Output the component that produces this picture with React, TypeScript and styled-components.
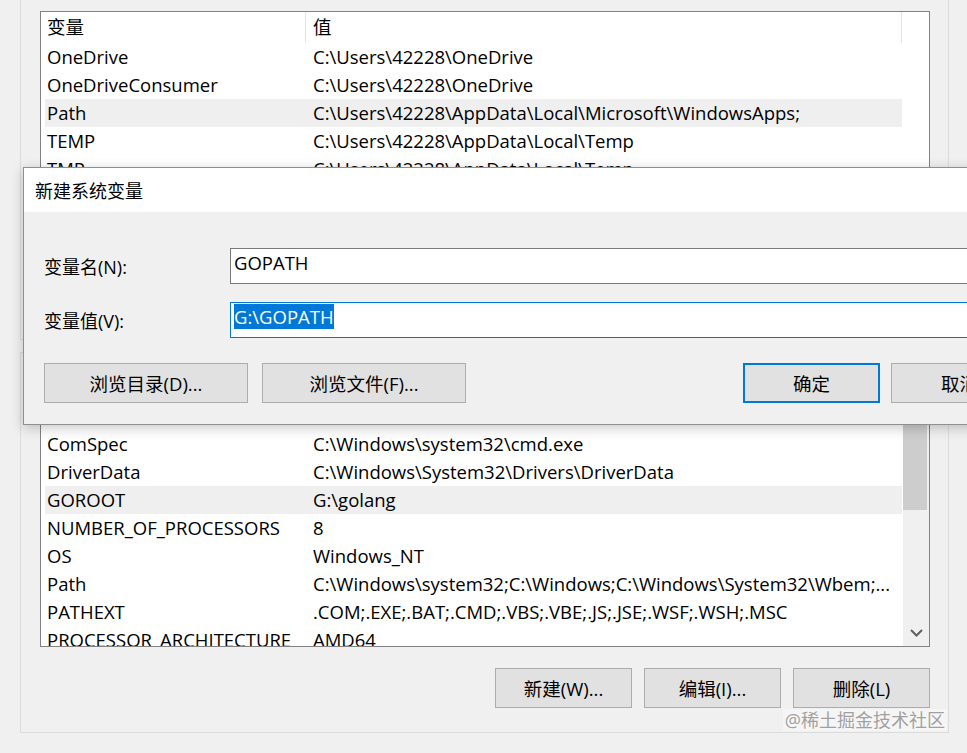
import React from 'react'
import styled, { createGlobalStyle } from 'styled-components'

interface EnvVariable {
  name: string
  value: string
}

const userVariables: EnvVariable[] = [
  { name: 'OneDrive', value: 'C:\\Users\\42228\\OneDrive' },
  { name: 'OneDriveConsumer', value: 'C:\\Users\\42228\\OneDrive' },
  { name: 'Path', value: 'C:\\Users\\42228\\AppData\\Local\\Microsoft\\WindowsApps;' },
  { name: 'TEMP', value: 'C:\\Users\\42228\\AppData\\Local\\Temp' },
  { name: 'TMP', value: 'C:\\Users\\42228\\AppData\\Local\\Temp' }
]

const systemVariables: EnvVariable[] = [
  { name: 'CLASSPATH', value: 'C:\\Windows' },
  { name: 'ComSpec', value: 'C:\\Windows\\system32\\cmd.exe' },
  { name: 'DriverData', value: 'C:\\Windows\\System32\\Drivers\\DriverData' },
  { name: 'GOROOT', value: 'G:\\golang' },
  { name: 'NUMBER_OF_PROCESSORS', value: '8' },
  { name: 'OS', value: 'Windows_NT' },
  { name: 'Path', value: 'C:\\Windows\\system32;C:\\Windows;C:\\Windows\\System32\\Wbem;...' },
  { name: 'PATHEXT', value: '.COM;.EXE;.BAT;.CMD;.VBS;.VBE;.JS;.JSE;.WSF;.WSH;.MSC' },
  { name: 'PROCESSOR_ARCHITECTURE', value: 'AMD64' }
]

const VariableTable = ({
  rows,
  selected
}: {
  rows: EnvVariable[]
  selected: number
}) => (
  <Table>
    <HeaderRow>
      <HeaderCell $first>变量</HeaderCell>
      <HeaderCell>值</HeaderCell>
    </HeaderRow>
    {rows.map((row, index) => (
      <Row key={row.name + index} $selected={index === selected}>
        <NameCell>{row.name}</NameCell>
        <ValueCell>{row.value}</ValueCell>
      </Row>
    ))}
  </Table>
)

const App = () => {
  return (
    <>
      <GlobalStyle />
      <Window>
        <UserGroup>
          <ListBox $height={254}>
            <VariableTable rows={userVariables} selected={2} />
          </ListBox>
        </UserGroup>

        <SystemGroup>
          <ListBox $height={277}>
            <VariableTable rows={systemVariables} selected={3} />
            <ScrollBar>
              <ScrollArrow />
              <ScrollThumb />
              <ScrollTrack />
              <ScrollArrow>
                <svg width="13" height="8" viewBox="0 0 13 8">
                  <polyline
                    points="1,1 6.5,6.5 12,1"
                    fill="none"
                    stroke="#606060"
                    strokeWidth="2"
                  />
                </svg>
              </ScrollArrow>
            </ScrollBar>
          </ListBox>
          <ButtonRow>
            <Button>新建(W)...</Button>
            <Button>编辑(I)...</Button>
            <Button>删除(L)</Button>
          </ButtonRow>
        </SystemGroup>

        <Dialog>
          <DialogTitle>新建系统变量</DialogTitle>
          <DialogBody>
            <FormGrid>
              <FieldLabel>变量名(N):</FieldLabel>
              <TextField>GOPATH</TextField>
              <FieldLabel>变量值(V):</FieldLabel>
              <TextField $focused>
                <Selection>G:\GOPATH</Selection>
              </TextField>
            </FormGrid>
            <DialogButtons>
              <Button $wide>浏览目录(D)...</Button>
              <Button $wide>浏览文件(F)...</Button>
              <Spacer />
              <Button $default>确定</Button>
              <Button>取消</Button>
            </DialogButtons>
          </DialogBody>
        </Dialog>

        <Watermark>@稀土掘金技术社区</Watermark>
      </Window>
    </>
  )
}

const GlobalStyle = createGlobalStyle`
  * {
    box-sizing: border-box;
  }

  html,
  body {
    margin: 0;
    padding: 0;
    background: #f0f0f0;
  }

  body {
    font-family: "Open Sans", "Noto Sans CJK SC", sans-serif;
    font-size: 18.5px;
    color: #000;
  }
`

const Window = styled.div`
  position: relative;
  width: 967px;
  height: 753px;
  overflow: hidden;
  padding-left: 20px;
  background: #f0f0f0;
`

const GroupBox = styled.section`
  width: 929px;
  border: 1px solid #dcdcdc;
  padding: 0 18px 0 19px;
`

/* the user group's buttons sit under the open dialog, only its list shows */
const UserGroup = styled(GroupBox)`
  border-top: none;
  padding-top: 11px;
  padding-bottom: 74px;
`

const SystemGroup = styled(GroupBox)`
  margin-top: 12px;
  padding-top: 17px;
  padding-bottom: 24px;
`

const ListBox = styled.div<{ $height: number }>`
  display: flex;
  width: 890px;
  height: ${({ $height }) => $height}px;
  overflow: hidden;
  border: 1px solid #828282;
  background: #fff;
`

const Table = styled.div`
  flex: 1;
  min-width: 0;
`

const HeaderRow = styled.div`
  display: grid;
  grid-template-columns: 261px 596px;
  height: 31px;
  margin-left: 4px;
`

const HeaderCell = styled.div<{ $first?: boolean }>`
  padding-left: ${({ $first }) => ($first ? '2px' : '7px')};
  line-height: 30px;
  border-right: 1px solid #e5e5e5;
  white-space: nowrap;
`

const Row = styled.div<{ $selected: boolean }>`
  display: grid;
  grid-template-columns: 261px 596px;
  width: 857px;
  height: 28px;
  margin-left: 4px;
  line-height: 27px;
  background: ${({ $selected }) => ($selected ? '#efefef' : 'transparent')};
`

const NameCell = styled.div`
  padding-left: 2px;
  overflow: hidden;
  white-space: nowrap;
`

const ValueCell = styled.div`
  padding-left: 7px;
  overflow: hidden;
  white-space: nowrap;
  text-overflow: ellipsis;
`

const ScrollBar = styled.div`
  display: flex;
  flex-direction: column;
  width: 26px;
  background: #f0f0f0;
`

const ScrollArrow = styled.div`
  display: flex;
  align-items: center;
  justify-content: center;
  height: 26px;
  flex-shrink: 0;
`

const ScrollThumb = styled.div`
  height: 113px;
  margin: 0 2px 0 0;
  background: #cdcdcd;
`

const ScrollTrack = styled.div`
  flex: 1;
`

const ButtonRow = styled.div`
  display: flex;
  justify-content: flex-end;
  gap: 12px;
  margin-top: 21px;
`

const Button = styled.button<{ $wide?: boolean; $default?: boolean }>`
  width: ${({ $wide }) => ($wide ? '204px' : '137px')};
  height: 40px;
  padding: 0;
  flex-shrink: 0;
  border: ${({ $default }) =>
    $default ? '2px solid #0078d7' : '1px solid #adadad'};
  background: #e1e1e1;
  font-family: inherit;
  font-size: 18.5px;
  color: #000;
  white-space: nowrap;
`

const Dialog = styled.div`
  position: absolute;
  top: 167px;
  left: 23px;
  width: 1026px;
  height: 258px;
  border: 1px solid #8f8f8f;
  background: #f0f0f0;
  box-shadow: 0 3px 12px rgba(0, 0, 0, 0.22);
`

const DialogTitle = styled.div`
  display: flex;
  align-items: center;
  height: 44px;
  padding-left: 11px;
  background: #fff;
  font-size: 18px;
`

const DialogBody = styled.div`
  padding: 36px 20px 21px 20px;
`

const FormGrid = styled.div`
  display: grid;
  grid-template-columns: 186px 1fr;
  row-gap: 18px;
  align-items: center;
`

const FieldLabel = styled.div`
  font-size: 18px;
  white-space: nowrap;
`

const TextField = styled.div<{ $focused?: boolean }>`
  height: 36px;
  padding: 1px 3px;
  border: 1px solid ${({ $focused }) => ($focused ? '#0078d7' : '#7a7a7a')};
  background: #fff;
  line-height: 26px;
  white-space: nowrap;
`

const Selection = styled.span`
  background: #0078d7;
  color: #fff;
`

const DialogButtons = styled.div`
  display: flex;
  gap: 14px;
  margin-top: 25px;

  & > button:last-child {
    margin-left: -3px;
  }
`

const Spacer = styled.div`
  flex: 1;
`

const Watermark = styled.div`
  position: absolute;
  right: 20px;
  bottom: 22px;
  padding: 0 2px;
  background: rgba(255, 255, 255, 0.35);
  font-size: 18px;
  line-height: 22px;
  color: #a0a0a0;
  text-shadow: 0 0 2px #fff;
  white-space: nowrap;
`

export default App
